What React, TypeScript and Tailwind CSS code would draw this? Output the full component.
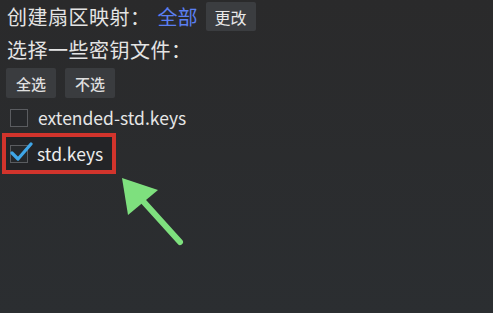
import React from "react";

export default function App() {
  const font = { fontFamily: '"Noto Sans CJK SC", "Noto Sans", sans-serif' };
  return (
    <div
      className="relative w-[493px] h-[313px] overflow-hidden bg-gradient-to-b from-[#2a2a2b] to-[#2b2e31] text-[#e4e4e4]"
      style={font}
    >
      <div className="flex flex-col pl-[7px] pt-[2px]">
        <div className="flex items-center h-[29px]">
          <span className="text-[20px] leading-none tracking-[0.5px]">创建扇区映射：</span>
          <span className="ml-[7px] text-[20px] leading-none text-[#5b7ff2]">全部</span>
          <button className="ml-[8px] h-[29px] w-[50px] rounded-[2px] bg-[#3b3d40] text-[16px] leading-none text-[#e8e8e8]">
            更改
          </button>
        </div>
        <div className="mt-[6px] flex items-center h-[26px]">
          <span className="text-[20px] leading-none tracking-[0.5px]">选择一些密钥文件：</span>
        </div>
        <div className="mt-[5px] flex gap-[9px] -ml-[1px]">
          <button className="h-[30px] w-[50px] rounded-[2px] bg-[#3a3c3f] text-[15px] font-medium leading-none text-[#e0e0e0]">
            全选
          </button>
          <button className="h-[30px] w-[50px] rounded-[2px] bg-[#3a3c3f] text-[15px] font-medium leading-none text-[#e0e0e0]">
            不选
          </button>
        </div>
        <div className="mt-[9px] flex items-center h-[22px]">
          <div className="ml-[3px] h-[18px] w-[18px] border-[1.5px] border-[#5a5c60] bg-[#26282b]" />
          <span className="ml-[10px] text-[17.5px] leading-none text-[#e6e6e6]">extended-std.keys</span>
        </div>
      </div>
      <div className="ml-[2px] mt-[4px] flex h-[41px] w-[114px] items-center border-[4px] border-[#d2342c] bg-[#232427]">
        <div className="relative ml-[4px] h-[18px] w-[18px] border-[1.5px] border-[#5a5c60] bg-[#26282b]">
          <svg className="absolute -left-[2px] -top-[5px]" width="24" height="22" viewBox="0 0 24 22">
            <path d="M3 12 L9 18 L22 3" fill="none" stroke="#3fa6e8" strokeWidth="3.2" strokeLinecap="round" strokeLinejoin="round" />
          </svg>
        </div>
        <span className="ml-[9px] text-[17.5px] leading-none text-[#ececec]">std.keys</span>
      </div>
      <svg className="absolute left-0 top-0 pointer-events-none" width="493" height="313" viewBox="0 0 493 313">
        <line x1="180" y1="242" x2="133" y2="190" stroke="#7ee07e" strokeWidth="6" strokeLinecap="round" />
        <polygon points="122,178 158,190 128,215" fill="#7ee07e" />
      </svg>
    </div>
  );
}
